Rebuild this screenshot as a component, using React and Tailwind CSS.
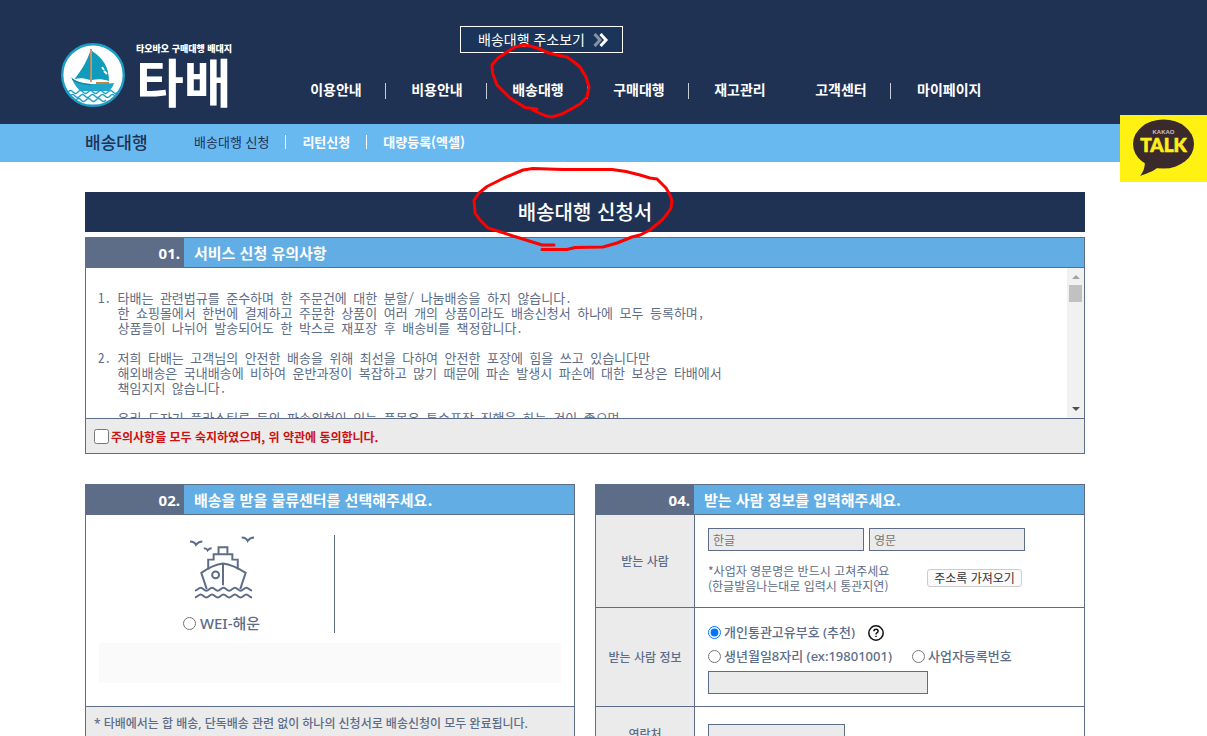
const MENU = [
  { label: "이용안내", divider: true },
  { label: "비용안내", divider: true },
  { label: "배송대행", divider: true },
  { label: "구매대행", divider: true },
  { label: "재고관리", divider: false },
  { label: "고객센터", divider: true },
  { label: "마이페이지", divider: false },
];

const TERMS = `1. 타배는 관련법규를 준수하며 한 주문건에 대한 분할/ 나눔배송을 하지 않습니다.
   한 쇼핑몰에서 한번에 결제하고 주문한 상품이 여러 개의 상품이라도 배송신청서 하나에 모두 등록하며,
   상품들이 나뉘어 발송되어도 한 박스로 재포장 후 배송비를 책정합니다.

2. 저희 타배는 고객님의 안전한 배송을 위해 최선을 다하여 안전한 포장에 힘을 쓰고 있습니다만
   해외배송은 국내배송에 비하여 운반과정이 복잡하고 많기 때문에 파손 발생시 파손에 대한 보상은 타배에서
   책임지지 않습니다.

   유리 도자기 플라스틱류 등의 파손위험이 있는 품목은 특수포장 진행을 하는 것이 좋으며`;

function BoatLogo() {
  return (
    <svg viewBox="0 0 64 64" className="size-16 shrink-0" aria-hidden="true">
      <circle cx="32" cy="32" r="30.8" fill="#fff" stroke="#1b9fc6" strokeWidth="2.400" />
      <path d="M29 9C25 20 20 28 13.500 36c5-1 10-1 15.500 1 .5-9 .5-18 0-28z" fill="#0f9bbb" />
      <path d="M31 8c11 7 17 16 17 30-6-2-12-2-17-1z" fill="#0f9bbb" />
      <path d="M30 6v33" stroke="#b06a2c" strokeWidth="1.4" />
      <path d="M41 24l2 3M43 28l3 3" stroke="#fff" strokeWidth="1.8" />
      <path d="M35 39h13v3H35z" fill="#c9823b" />
      <path d="M10 34c5 5 12 6 20 7 8 0 15 0 23-1-1 4-3 6-5 8H19c-4-4-7-9-9-14z" fill="#1fa6c9" />
      <path d="M11 36c5 4 12 5 19 6" stroke="#0b7898" strokeWidth="1" fill="none" />
      <g fill="none" stroke="#1b9fc6" strokeWidth="1.3">
        <path d="M7 49q2.500-3 5 0t5 0 5 0 5 0 5 0 5 0 5 0 5 0 5 0 5 0" />
        <path d="M9 53q2.500-3 5 0t5 0 5 0 5 0 5 0 5 0 5 0 5 0 5 0" />
        <path d="M15 57q2.500-3 5 0t5 0 5 0 5 0 5 0 5 0" />
      </g>
    </svg>
  );
}

function ShipIcon() {
  return (
    <svg viewBox="0 0 66 66" className="h-[66px] w-[66px]" fill="none" stroke="#5d6c87" strokeWidth="2" aria-hidden="true">
      <path d="M0.500 6.500Q5 6.500 6.500 10Q9 6.500 13 6.500" />
      <path d="M14.500 13.500Q17.500 13.500 18.500 15.500Q20 13.500 22.500 13.500" />
      <path d="M53 2.500Q57.500 2.500 59 6Q61.500 2.500 65.500 2.500" />
      <path d="M29.500 19V12.500h9V19" />
      <path d="M19 35V25h5.500v-5.500h19V25H49v10" />
      <path d="M17.500 55L12 38.500Q24 30 34 29Q44 30 57 38.500L51.500 55" />
      <path d="M34 29v22" />
      <circle cx="26.500" cy="40.500" r="3.500" />
      <path d="M5.500 56.500c3-.5 3.500-3 5.800-3s3.500 3 5.800 3 3.500-3 5.800-3 3.500 3 5.800 3 3.500-3 5.800-3 3.500 3 5.800 3 3.500-3 5.800-3 3.500 3 5.800 3 3.500-3 5.800-3 3 2.500 5.800 3" />
      <path d="M5.500 63.500c3-.5 3.500-3 5.800-3s3.500 3 5.800 3 3.500-3 5.800-3 3.500 3 5.800 3 3.500-3 5.800-3 3.500 3 5.800 3 3.500-3 5.800-3 3.500 3 5.800 3 3.500-3 5.800-3 3 2.500 5.800 3" />
    </svg>
  );
}

function KakaoButton() {
  return (
    <a href="#kakao" aria-label="KAKAO TALK" className="absolute top-[115px] right-0 block h-[67px] w-[87px] bg-[#fff212]">
      <svg viewBox="0 0 87 67" className="h-full w-full">
        <ellipse cx="43.500" cy="29" rx="30.500" ry="24.500" fill="#3b2a2b" />
        <path d="M25 44c0 8-1 12-5 17 9-3 15-6 20-10z" fill="#3b2a2b" />
        <text x="43.500" y="19" textAnchor="middle" fontSize="6" fontWeight="700" fill="#cfc3c3" fontFamily="Liberation Sans, sans-serif">KAKAO</text>
        <text x="43.500" y="37" textAnchor="middle" fontSize="19" fontWeight="900" fill="#ffee1a" stroke="#ffee1a" strokeWidth="0.600" fontFamily="Lato, sans-serif">TALK</text>
      </svg>
    </a>
  );
}

function PenMarks() {
  return (
    <svg viewBox="0 0 700 260" className="pointer-events-none absolute top-0 left-0 h-[260px] w-[700px]" fill="none" stroke="#fe0000" strokeWidth="3" strokeLinecap="round" strokeLinejoin="round" aria-hidden="true">
      <path d="M537 109L525 107.500L510 98L497 85L492.500 73L492 65L498 58L507 52L515 47L523 45L530 46L537 48L549 53L557 55L567 57L574 62L580 67L586 77L589 87L587 97L580 104L573 108L562 114L552 117L546 116L537 112L529 108" />
      <path d="M554 245L542 245L526 240L513 236L501 232L488 228L480 220L475 213L474 200L479 193L487 186.500L504 178L523 170L533 168.500L563 169.500L612 169.500L626 171.500L640 175L650 178L657 179L662 184L666 188L670 195L672 201L671 208L667 214L662 220L650 230L640 235L632 237L617 243L603 247L575 247.500L567 249.500L542 249.500" />
    </svg>
  );
}

function SectionHead({ no, title }) {
  return (
    <div className="flex h-[30px] border-b border-[#5d6c87] text-[15px] leading-[30px] font-bold text-white">
      <span className="w-[98px] shrink-0 bg-[#5d6c87] pr-1 text-right font-['Noto_Sans',sans-serif]">{no}</span>
      <h2 className="flex-1 bg-[#62ade3] pl-[10px]">{title}</h2>
    </div>
  );
}

function Header() {
  return (
    <header className="bg-[#1f3253] pr-[37px]">
      <div className="mx-auto flex h-[124px] max-w-[1000px] items-start">
        <a href="#home" className="mt-[43px] -ml-6 flex w-[225px] shrink-0 items-start gap-[11px] text-white">
          <BoatLogo />
          <span className="whitespace-nowrap">
            <span className="block text-[9px] leading-3 font-black">타오바오 구매대행 배대지</span>
            <span className="block text-[52px] leading-[52px] font-bold">타배</span>
          </span>
        </a>
        <div className="pt-[26px]">
          <a href="#address" className="ml-[174px] flex h-[27px] w-[163px] items-center border border-white bg-[#1b3459] pb-[2px] pl-[17px] text-sm leading-4 whitespace-nowrap text-white">
            배송대행 주소보기
            <svg viewBox="0 0 16 14" className="mt-[2px] ml-2 h-[14px] w-4" fill="none" strokeWidth="3" aria-hidden="true">
              <path d="M1.500 1L7 7L1.500 13" stroke="#8793a8" />
              <path d="M7.500 1L13 7L7.500 13" stroke="#fff" />
            </svg>
          </a>
          <nav className="mt-[30px] -ml-px flex h-4 text-center text-sm leading-[13px] font-bold whitespace-nowrap text-white">
            {MENU.map((item) => (
              <a
                key={item.label}
                href="#menu"
                className={`min-w-[101px] border-r ${item.divider ? "border-[#c8ccd4]" : "border-transparent"} ${item.label.length > 4 ? "px-[26px]" : "pl-[2px]"}`}
              >
                {item.label}
              </a>
            ))}
          </nav>
        </div>
      </div>
    </header>
  );
}

function SubNav() {
  return (
    <div className="bg-[#69b9f1] pr-[37px]">
      <div className="mx-auto flex h-[38px] max-w-[1000px] items-center pb-[2px] whitespace-nowrap">
        <strong className="w-[109px] text-[17px] leading-5 font-medium text-[#1f3253]">배송대행</strong>
        <nav className="flex items-center gap-4 text-[13px] leading-4 text-white">
          <a href="#apply" className="text-[#1f3253]">배송대행 신청</a>
          <span className="h-[14px] w-px bg-white" />
          <a href="#return" className="font-bold">리턴신청</a>
          <span className="h-[14px] w-px bg-white" />
          <a href="#bulk" className="font-bold">대량등록(엑셀)</a>
        </nav>
      </div>
    </div>
  );
}

function TermsPanel() {
  return (
    <section className="mt-[5px] border border-[#5d6c87]">
      <SectionHead no="01." title="서비스 신청 유의사항" />
      <div className="flex h-[150px]">
        <textarea
          readOnly
          wrap="off"
          aria-label="서비스 신청 유의사항"
          defaultValue={TERMS}
          className="block h-full min-w-0 flex-1 resize-none overflow-hidden bg-white pt-[22px] pl-3 font-['Noto_Sans_Mono_CJK_KR','Liberation_Mono','Noto_Sans_CJK_KR',monospace] text-[13px] leading-[15px] text-[#5d6c87] outline-none"
        />
        <div className="flex w-[17px] flex-col items-center bg-[#f1f1f1] py-[7px]">
          <svg viewBox="0 0 8 4" className="h-1 w-2"><path d="M4 0l4 4H0z" fill="#a3a3a3" /></svg>
          <span className="mt-[6px] h-[17px] w-[13px] bg-[#c1c1c1]" />
          <svg viewBox="0 0 8 4" className="mt-auto h-1 w-2"><path d="M0 0h8L4 4z" fill="#505050" /></svg>
        </div>
      </div>
      <label className="flex h-[35px] items-center gap-[2px] border-t border-[#5d6c87] bg-[#ebebeb] pt-px pl-2 text-xs font-bold text-[#cc1111]">
        <input type="checkbox" className="size-[15px]" />
        주의사항을 모두 숙지하였으며, 위 약관에 동의합니다.
      </label>
    </section>
  );
}

function CenterPanel() {
  return (
    <section className="flex-1 border border-[#5d6c87]">
      <SectionHead no="02." title="배송을 받을 물류센터를 선택해주세요." />
      <div className="px-[13px] pt-5 pb-[23px]">
        <label className="flex h-[98px] w-[236px] flex-col items-center border-r border-[#5d6c87] pl-[10px]">
          <ShipIcon />
          <span className="mt-[13px] flex items-center gap-1 font-['Noto_Sans','Noto_Sans_CJK_KR',sans-serif] text-[15px] leading-5 font-medium">
            <input type="radio" name="center" className="size-[13px]" />
            WEI-해운
          </span>
        </label>
        <div className="mt-[10px] h-10 bg-[#fafafa]" />
      </div>
      <p className="h-[60px] border-t border-[#5d6c87] bg-[#ebebeb] pt-2 pl-2 font-['Noto_Sans','Noto_Sans_CJK_KR',sans-serif] text-xs leading-[18px] font-medium">
        * 타배에서는 합 배송, 단독배송 관련 없이 하나의 신청서로 배송신청이 모두 완료됩니다.
      </p>
    </section>
  );
}

const FIELD = "h-[23px] border border-[#5d6c87] bg-[#ebebeb] px-1 text-xs placeholder:text-[#757575]";
const ROW_LABEL = "flex w-[99px] shrink-0 items-center justify-center border-r border-[#5d6c87] bg-[#ebebeb] text-xs font-medium";

function ReceiverPanel() {
  return (
    <section className="flex-1 border border-[#5d6c87]">
      <SectionHead no="04." title="받는 사람 정보를 입력해주세요." />
      <div className="flex h-[93px] border-b border-[#5d6c87]">
        <div className={ROW_LABEL}>받는 사람</div>
        <div className="pt-[13px] pl-[13px]">
          <div className="flex gap-[5px]">
            <input aria-label="한글" placeholder="한글" className={`${FIELD} w-[156px]`} />
            <input aria-label="영문" placeholder="영문" className={`${FIELD} w-[156px]`} />
          </div>
          <div className="mt-3 flex items-center">
            <p className="w-[219px] text-xs leading-[15px]">
              *사업자 영문명은 반드시 고쳐주세요
              <br />
              (한글발음나는대로 입력시 통관지연)
            </p>
            <button type="button" className="h-[18px] w-[95px] rounded-[3px] border border-[#ccc] bg-[#fafafa] text-xs leading-4 whitespace-nowrap text-[#333]">
              주소록 가져오기
            </button>
          </div>
        </div>
      </div>
      <div className="flex h-[99px] border-b border-[#5d6c87]">
        <div className={ROW_LABEL}>받는 사람 정보</div>
        <div className="pt-3 pl-[13px] font-['Noto_Sans','Noto_Sans_CJK_KR',sans-serif] text-[13px] leading-6 font-medium whitespace-nowrap">
          <div className="flex items-center">
            <label className="flex items-center gap-[3px]">
              <input type="radio" name="idtype" defaultChecked className="size-[13px]" />
              개인통관고유부호 (추천)
            </label>
            <button type="button" aria-label="도움말" className="mt-[2px] ml-[13px] size-4">
              <svg viewBox="0 0 16 16" className="size-4 overflow-visible" fill="none" stroke="#111" strokeWidth="1.500">
                <circle cx="8" cy="8" r="7.200" />
                <path d="M5.900 6.300q0-2.100 2.100-2.100t2.100 1.900q0 1.200-1.200 1.800-.900.500-.900 1.500M8 10.700v1.400" />
              </svg>
            </button>
          </div>
          <div className="flex items-center gap-5">
            <label className="flex items-center gap-[3px]">
              <input type="radio" name="idtype" className="size-[13px]" />
              생년월일8자리 (ex:19801001)
            </label>
            <label className="flex items-center gap-[3px]">
              <input type="radio" name="idtype" className="size-[13px]" />
              사업자등록번호
            </label>
          </div>
          <input aria-label="개인통관고유부호" className={`${FIELD} mt-[3px] block w-[220px]`} />
        </div>
      </div>
      <div className="flex">
        <div className={`${ROW_LABEL} h-[54px]`}>연락처</div>
        <div className="pt-[17px] pl-[13px]">
          <input aria-label="연락처" className={`${FIELD} block w-[137px]`} />
        </div>
      </div>
    </section>
  );
}

export default function App() {
  return (
    <div lang="ko" className="relative h-screen overflow-hidden bg-white font-['Noto_Sans_CJK_KR','Noto_Sans',sans-serif] text-[#5d6c87]">
      <Header />
      <SubNav />
      <main className="pt-[30px] pr-[37px]">
        <div className="mx-auto max-w-[1000px]">
          <h1 className="h-10 bg-[#1f3253] text-center text-xl leading-10 font-medium text-white">배송대행 신청서</h1>
          <TermsPanel />
          <div className="mt-[30px] flex items-start gap-5">
            <CenterPanel />
            <ReceiverPanel />
          </div>
        </div>
      </main>
      <KakaoButton />
      <PenMarks />
    </div>
  );
}
